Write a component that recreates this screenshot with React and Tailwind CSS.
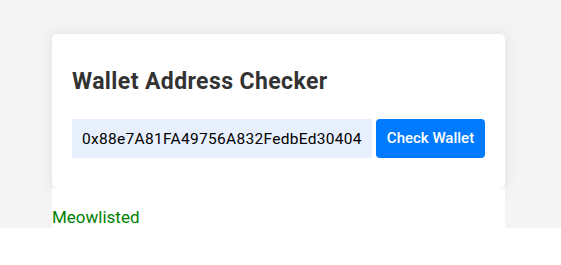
import React from "react";

export default function App() {
  return (
    <div className="w-[561px] h-[265px] bg-white overflow-hidden" style={{ fontFamily: "Roboto, 'Noto Sans', sans-serif" }}>
      <div className="h-[228px] bg-[#f4f4f4] pt-[34px] pl-[52px]">
        <div className="w-[453px]">
          <div className="bg-white rounded-[5px] shadow-[0_0_14px_rgba(0,0,0,0.09)] px-5 pt-[33px] pb-[30px]">
            <h1 className="text-[23px] leading-[29px] font-bold text-[#333] tracking-[0.4px]">Wallet Address Checker</h1>
            <div className="flex gap-[4px] mt-[23px]">
              <input
                readOnly
                value="0x88e7A81FA49756A832FedbEd30404995a1b2c3d4"
                className="w-[300px] h-[39px] bg-[#e8f0fe] px-[10px] text-[15.5px] text-black outline-none tracking-[0.3px]"
              />
              <button className="w-[109px] h-[39px] bg-[#007bff] text-white rounded-[4px] text-[15px] font-medium">
                Check Wallet
              </button>
            </div>
          </div>
          <div className="bg-white h-[120px] pt-[18px] text-[17px] leading-[22px] text-[#008000]">Meowlisted</div>
        </div>
      </div>
    </div>
  );
}
